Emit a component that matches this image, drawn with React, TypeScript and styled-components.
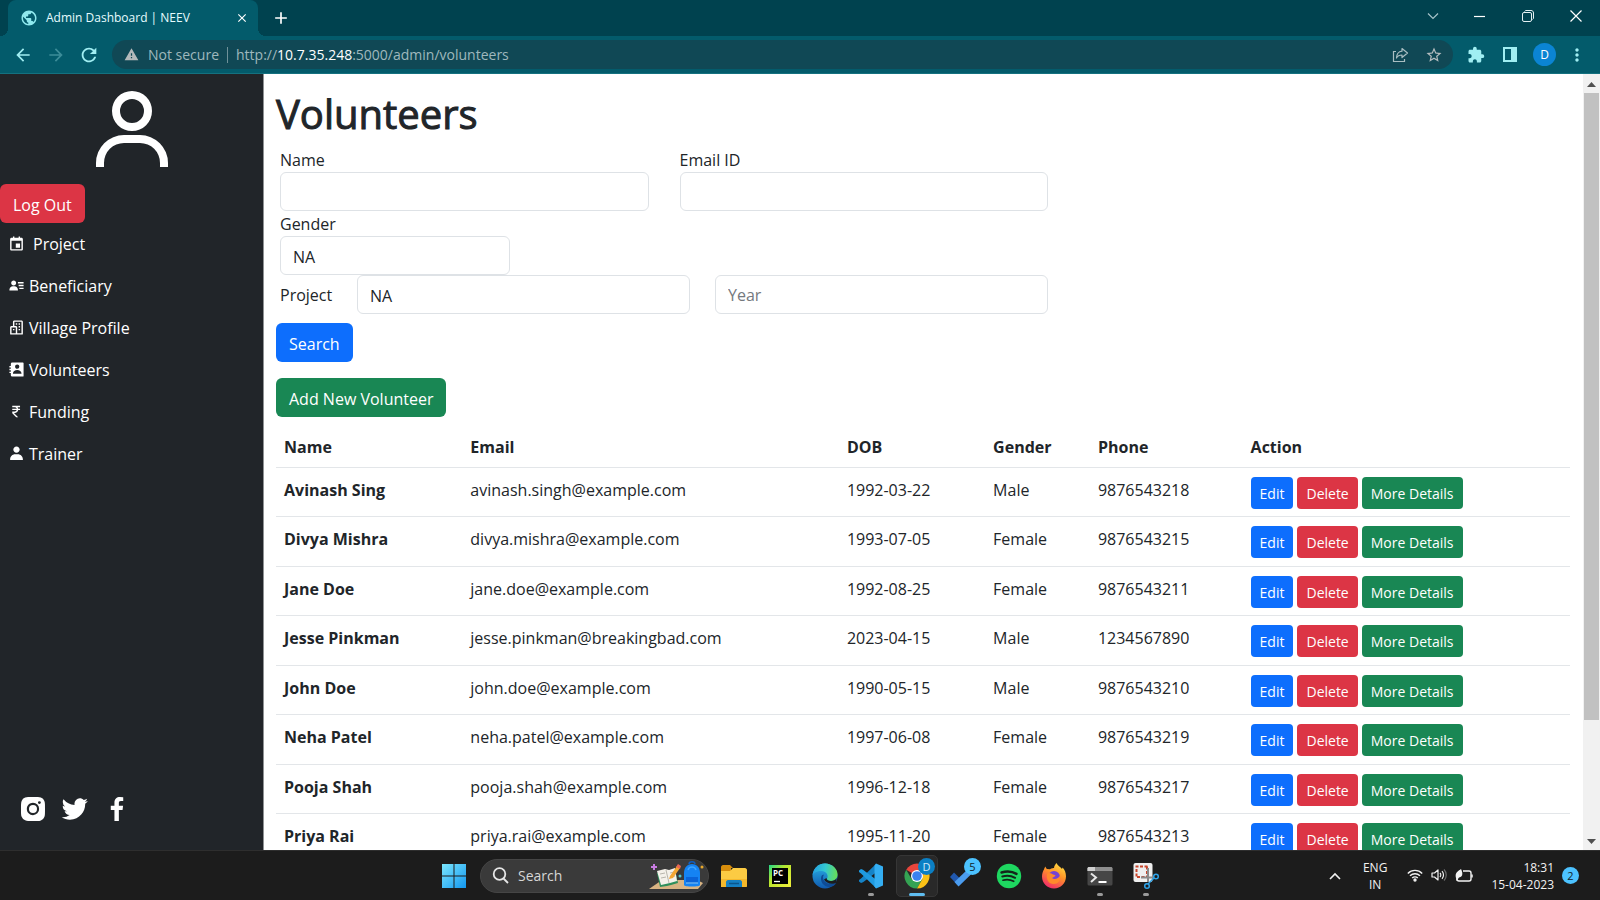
import React from "react";
import styled, { createGlobalStyle } from "styled-components";
import {
  BiUser,
  BiCalendarEvent,
  BiSolidUserDetail,
  BiBuildings,
  BiSolidContact,
  BiRupee,
  BiSolidUser,
  BiLogoInstagramAlt,
  BiLogoTwitter,
  BiLogoFacebook,
} from "react-icons/bi";
import {
  MdPublic,
  MdClose,
  MdAdd,
  MdArrowBack,
  MdArrowForward,
  MdRefresh,
  MdWarning,
  MdStarBorder,
  MdExtension,
  MdMoreVert,
} from "react-icons/md";

const GlobalStyle = createGlobalStyle`
  *, *::before, *::after { box-sizing: border-box; }
  body {
    margin: 0;
    font-family: "Segoe UI", "Open Sans", "Noto Sans", sans-serif;
    font-size: 16px;
    line-height: 24px;
    color: #212529;
  }
  button, input, select { font: inherit; color: inherit; margin: 0; }
  button { cursor: pointer; }
  svg { display: block; flex: none; }
`;

const Screen = styled.div`
  display: flex;
  flex-direction: column;
  height: 100vh;
  overflow: hidden;
  background: #fff;
`;

/* ---------- browser frame ---------- */

const TabStrip = styled.div`
  display: flex;
  align-items: stretch;
  height: 36px;
  flex: none;
  padding-left: 8px;
  background: #00424f;
`;

const Tab = styled.div`
  position: relative;
  display: flex;
  align-items: center;
  width: 250px;
  padding: 0 9px 0 12px;
  border-radius: 8px 8px 0 0;
  background: #035b6b;
  color: #e6fbff;
  font-size: 12px;
  line-height: 16px;

  &::before,
  &::after {
    content: "";
    position: absolute;
    bottom: 0;
    width: 8px;
    height: 8px;
  }
  &::before {
    right: 100%;
    background: radial-gradient(circle at 0 0, transparent 8px, #035b6b 8px);
  }
  &::after {
    left: 100%;
    background: radial-gradient(circle at 100% 0, transparent 8px, #035b6b 8px);
  }
`;

const TabTitle = styled.span`
  flex: 1;
  margin-left: 8px;
  white-space: nowrap;
`;

const ChromeButton = styled.button<{ $w?: number; $color?: string }>`
  display: flex;
  align-items: center;
  justify-content: center;
  width: ${(p) => p.$w ?? 33}px;
  padding: 0;
  border: 0;
  background: none;
  color: ${(p) => p.$color ?? "#a0eef2"};
`;

const WindowButtons = styled.div`
  display: flex;
  margin-left: auto;
  padding-bottom: 5px;
`;

const Toolbar = styled.div`
  display: flex;
  align-items: center;
  height: 38px;
  flex: none;
  padding: 0 7px 0 6px;
  background: #035b6b;
  border-bottom: 1px solid #14717f;
`;

const AddressBar = styled.div`
  display: flex;
  align-items: center;
  flex: 1;
  height: 29px;
  margin-left: 7px;
  padding: 0 3px 0 12px;
  border-radius: 15px;
  background: #104855;
  color: #9fb8bd;
  font-size: 14px;
  line-height: 20px;
`;

const Security = styled.span`
  margin-left: 9px;
  padding-right: 8px;
  border-right: 1px solid #6f9199;
  line-height: 16px;
`;

const Address = styled.span`
  flex: 1;
  margin-left: 8px;
  b {
    font-weight: 400;
    color: #fff;
  }
`;

const Avatar = styled.button`
  display: flex;
  align-items: center;
  justify-content: center;
  width: 23px;
  height: 23px;
  margin: 0 4px 0 13px;
  padding: 0;
  border: 0;
  border-radius: 50%;
  background: #0b84d3;
  color: #fff;
  font-size: 12px;
`;

/* ---------- page ---------- */

const Page = styled.div`
  display: flex;
  flex: 1;
  min-height: 0;
`;

const Sidebar = styled.aside`
  display: flex;
  flex-direction: column;
  width: 264px;
  flex: none;
  background: #212529;
  border-right: 1px solid #8f9294;
  color: #fff;
`;

const Profile = styled.div`
  display: flex;
  justify-content: center;
  padding: 9px 0 5px;
`;

type Tone = "primary" | "danger" | "success";
const tones: Record<Tone, string> = {
  primary: "#0d6efd",
  danger: "#dc3545",
  success: "#198754",
};

const Button = styled.button<{ $tone: Tone; $small?: boolean }>`
  align-self: flex-start;
  height: ${(p) => (p.$small ? 32 : 39)}px;
  padding: ${(p) => (p.$small ? "1px 9px 0" : "2px 13px 0")};
  border: 0;
  border-radius: ${(p) => (p.$small ? 4 : 6)}px;
  background: ${(p) => tones[p.$tone]};
  color: #fff;
  font-size: ${(p) => (p.$small ? 14 : 16)}px;
  white-space: nowrap;
`;

const Nav = styled.nav`
  display: flex;
  flex-direction: column;
  gap: 18px;
  padding: 9px 8px;
`;

const NavLink = styled.a<{ $wide?: boolean }>`
  display: flex;
  align-items: center;
  gap: ${(p) => (p.$wide ? 8 : 4)}px;
  color: #fff;
  text-decoration: none;
  svg {
    margin-bottom: 2px;
  }
`;

const Socials = styled.div`
  display: flex;
  gap: 10px;
  margin-top: auto;
  padding: 0 17px 25px;
  a {
    color: #fff;
  }
`;

const Main = styled.main`
  display: flex;
  flex-direction: column;
  flex: 1;
  min-width: 0;
  overflow: hidden;
  padding: 15px 13px 0 12px;
`;

const Title = styled.h1`
  margin: 0 0 8px;
  font-size: 40px;
  line-height: 50px;
  font-weight: 500;
  -webkit-text-stroke: 1px currentColor;
`;

const SearchForm = styled.form`
  display: flex;
  flex-direction: column;
`;

const Fields = styled.div`
  display: flex;
  flex-direction: column;
  max-width: 772px;
  margin-bottom: 9px;
  padding-left: 4px;
`;

const FieldPair = styled.div`
  display: grid;
  grid-template-columns: 1fr 1fr;
  gap: 31px;
`;

const Field = styled.div<{ $narrow?: boolean }>`
  display: flex;
  flex-direction: column;
  width: ${(p) => (p.$narrow ? "30%" : "auto")};
  label {
    padding-top: 2px;
    line-height: 23px;
  }
`;

const ProjectRow = styled.div`
  display: grid;
  grid-template-columns: 52px 1fr 1fr;
  align-items: center;
  gap: 25px;
`;

const TextBox = styled.input`
  width: 100%;
  height: 39px;
  padding: 1px 12px 0;
  border: 1px solid #dee2e6;
  border-radius: 6px;
  background: #fff;
  &::placeholder {
    color: #74797e;
    opacity: 1;
  }
`;

const Select = styled.select`
  appearance: none;
  width: 100%;
  height: 39px;
  padding: 2px 12px 0;
  border: 1px solid #dee2e6;
  border-radius: 6px;
  background: #fff;
`;

const AddRow = styled.div`
  display: flex;
  margin: 16px 0 8px;
`;

const Table = styled.table`
  width: 100%;
  table-layout: fixed;
  border-collapse: collapse;
  text-align: left;

  th,
  td {
    padding: 9px 9px 7px 8px;
    border-bottom: 1px solid #e3e6e9;
    vertical-align: top;
    line-height: 26px;
  }
  thead th {
    height: 42px;
  }
  tbody tr {
    height: 49px;
  }
  tbody tr:nth-child(even) {
    height: 50px;
  }
`;

const Actions = styled.div`
  display: flex;
  gap: 4px;
`;

const ScrollBar = styled.div`
  display: flex;
  flex-direction: column;
  align-items: center;
  width: 17px;
  flex: none;
  background: #f1f1f1;
`;

const ScrollArrow = styled.svg`
  width: 9px;
  height: 5px;
  margin: 8px 0 6px;
  fill: #505050;
`;

const ScrollTrack = styled.div`
  flex: 1;
  width: 15px;
`;

const ScrollThumb = styled.div`
  height: 85%;
  background: #c1c1c1;
`;

/* ---------- taskbar ---------- */

const Taskbar = styled.footer`
  display: flex;
  align-items: center;
  height: 50px;
  flex: none;
  padding: 0 21px 0 440px;
  background: #1c1c1c;
  border-top: 1px solid #2e2e2e;
  color: #f2f2f2;
`;

const TaskSearch = styled.label`
  display: flex;
  align-items: center;
  width: 229px;
  height: 34px;
  margin: 0 2px 0 13px;
  padding: 0 4px 0 11px;
  border: 1px solid #454545;
  border-radius: 17px;
  background: #3a3a3a;
  input {
    flex: 1;
    min-width: 0;
    margin-left: 9px;
    padding: 0;
    border: 0;
    background: none;
    font-size: 14px;
    line-height: 20px;
    outline: 0;
  }
  input::placeholder {
    color: #d6d6d6;
    opacity: 1;
  }
`;

const Apps = styled.div`
  display: flex;
  width: 458px;
  height: 42px;
`;

const AppButton = styled.button<{ $active?: boolean; $running?: boolean }>`
  position: relative;
  display: flex;
  align-items: center;
  justify-content: center;
  flex: 1;
  margin: 0 2px;
  padding: 0;
  border: 1px solid ${(p) => (p.$active ? "#363636" : "transparent")};
  border-radius: 5px;
  background: ${(p) => (p.$active ? "#292929" : "none")};

  &::after {
    content: "";
    display: ${(p) => (p.$active || p.$running ? "block" : "none")};
    position: absolute;
    bottom: 0;
    left: 50%;
    width: ${(p) => (p.$active ? 16 : 6)}px;
    height: 3px;
    border-radius: 2px;
    background: ${(p) => (p.$active ? "#5fbdf0" : "#9a9a9a")};
    transform: translateX(-50%);
  }
`;

const Badge = styled.span<{ $bg: string; $fg: string }>`
  position: absolute;
  top: 2px;
  right: 2px;
  width: 17px;
  height: 17px;
  border-radius: 50%;
  background: ${(p) => p.$bg};
  color: ${(p) => p.$fg};
  font-size: 11px;
  line-height: 17px;
  text-align: center;
`;

const Tray = styled.div`
  display: flex;
  align-items: center;
  margin-left: auto;
  font-size: 12px;
  line-height: 17px;
`;

const Language = styled.div`
  margin: 0 20px 0 22px;
  text-align: center;
`;

const StatusIcons = styled.div`
  display: flex;
  gap: 8px;
`;

const Clock = styled.div`
  margin: 0 8px 0 18px;
  text-align: right;
`;

const Count = styled.div`
  width: 17px;
  height: 17px;
  border-radius: 50%;
  background: #4cc2ff;
  color: #10222c;
  font-size: 11px;
  text-align: center;
`;

/* ---------- drawings ---------- */

const WindowsLogo = () => (
  <svg width="26" height="26" viewBox="0 0 26 26">
    <defs>
      <linearGradient id="win" x1="0" y1="0" x2="1" y2="1" gradientUnits="objectBoundingBox">
        <stop offset="0" stopColor="#7be6fd" />
        <stop offset="1" stopColor="#1297f0" />
      </linearGradient>
    </defs>
    <path fill="url(#win)" d="M1 1h11.500v11.500H1zM13.500 1H25v11.500H13.500zM1 13.500h11.500V25H1zM13.500 13.500H25V25H13.500z" />
  </svg>
);

const SearchArt = () => (
  <svg width="56" height="30" viewBox="0 0 56 30">
    <path d="M1 28 14 19h35l6 3-5 6z" fill="#d9b483" />
    <path d="M6 3v6M3 6h6" stroke="#c77be0" strokeWidth="2" />
    <path d="m9 12 8-3 4 2 6-2 3 13-7 2-4 1-7 1z" fill="#2f8f5b" />
    <path d="m9 10 8-2 4 1 6-2 2 13-7 2-9 2z" fill="#f4f1ea" />
    <path d="m18 9 3 13M12 13l5-1M13 17l5-1M22 12l4-1M23 16l4-1" stroke="#b9b6ad" />
    <path d="m22 15 7-10 3 2-7 10-4 1z" fill="#f3a632" />
    <path d="m28 6 2-3 3 2-1 3z" fill="#e86652" />
    <circle cx="32" cy="15" r="1.500" fill="#52c5cb" />
    <circle cx="54" cy="6" r="1.500" fill="#e9a92b" />
    <path d="M41 3c0-3 6-3 6 0" fill="none" stroke="#0f5fc2" strokeWidth="1.500" />
    <path d="M36 12c0-12 16-12 16 0v12c0 2-16 2-16 0z" fill="#1583f3" />
    <path d="M38 16h12v6c0 1-12 1-12 0z" fill="#0a63d8" />
    <path d="M38 22h12" stroke="#8dd5ff" />
    <path d="M40 9c1-4 7-4 8 0" fill="none" stroke="#3ea6ff" strokeWidth="1.500" />
  </svg>
);

const FolderIcon = () => (
  <svg width="26" height="24" viewBox="0 0 26 24">
    <path d="M0 3c0-1 1-2 2-2h7l3 3h-2v4H0z" fill="#d78d0c" />
    <path d="M0 7h9l3-3h12c1 0 2 1 2 2v15c0 1-1 2-2 2H0z" fill="#fccb43" />
    <path d="M0 15h26v7c0 .6-.4 1-1 1H1c-.6 0-1-.4-1-1z" fill="#f4b82c" />
    <path d="M5 18c0-1 1-2 2-2h12c1 0 2 1 2 2v5H5z" fill="#1580c4" />
    <path d="M8 19.500h10" stroke="#0b568d" strokeWidth="1.500" />
  </svg>
);

const PyCharmIcon = () => (
  <svg width="22" height="22" viewBox="0 0 22 22">
    <defs>
      <linearGradient id="pc" x1="0" y1="0" x2="1" y2="1">
        <stop offset="0" stopColor="#21d789" />
        <stop offset=".4" stopColor="#b8e62e" />
        <stop offset="1" stopColor="#f1ed3c" />
      </linearGradient>
    </defs>
    <path fill="url(#pc)" d="M0 0h22v22H0z" />
    <path d="M3 3h16v16H3z" />
    <path d="M5 16.500h6" stroke="#fff" strokeWidth="1.300" />
    <text x="4" y="11" fill="#fff" fontSize="8" fontWeight="700" fontFamily="Open Sans, sans-serif">
      PC
    </text>
  </svg>
);

const EdgeIcon = () => (
  <svg width="26" height="26" viewBox="0 0 26 26">
    <defs>
      <linearGradient id="eg" x1="0" y1=".3" x2="1" y2=".4">
        <stop offset="0" stopColor="#249fe2" />
        <stop offset=".5" stopColor="#33c8d2" />
        <stop offset="1" stopColor="#66df57" />
      </linearGradient>
      <linearGradient id="eb" x1="0" y1="0" x2="0" y2="1">
        <stop offset="0" stopColor="#2bb5e8" />
        <stop offset="1" stopColor="#1059ae" />
      </linearGradient>
    </defs>
    <circle cx="13" cy="13" r="12.500" fill="url(#eb)" />
    <path d="M.6 12C1.500 5 6.500.5 13 .5c7 0 12.500 5 12.500 11 0 4-3 6.500-6.500 6.500-3 0-4.500-1-4-2.200C17 12 14 8 9.500 8 5 8 1.500 10 .6 12z" fill="url(#eg)" />
    <path d="M9.500 13c-2 5 2 11 8 11 3.500 0 5.500-2 7-4.200-1 .6-3 1.200-5 1.200-5 0-8.500-3-8.500-6.500 0-1 .3-2 1-2.800-1 0-2 .4-2.500 1.300z" fill="#0f4b95" />
    <path d="M24.500 19.500c-4 2.500-10.500 1-12.500-3l2.500-1.500c0 2 2 3 4.500 3 2.300 0 4.500-.8 5.500-3z" fill="#1c1c1c" />
  </svg>
);

const CodeIcon = () => (
  <svg width="26" height="26" viewBox="0 0 26 26">
    <path d="M18 1 3 15.500 1 17v1.500L3 20l2-.8L20 8z" fill="#1583c7" />
    <path d="M18 25 3 10.500 1 9V7.500L3 6l2 .8L20 18z" fill="#1f9ae0" />
    <path d="m18 .5 7 3V22.500l-7 3-1.500-2V2.500z" fill="#34aef2" />
  </svg>
);

const ChromeIcon = () => (
  <svg width="26" height="26" viewBox="0 0 26 26">
    <path d="M13 13 2.200 6.700A12.500 12.500 0 0 1 23.800 6.700z" fill="#e8453c" />
    <path d="M2.200 6.700A12.500 12.500 0 0 0 13 25.500L18.400 16 13 13 7.600 16z" fill="#34a353" />
    <path d="M23.800 6.700A12.500 12.500 0 0 1 13 25.500L18.400 16 13 7z" fill="#fbc116" />
    <path d="M13 6.800h10.900L18 13z" fill="#e8453c" />
    <circle cx="13" cy="13" r="6" fill="#fff" />
    <circle cx="13" cy="13" r="4.800" fill="#3b82f0" />
  </svg>
);

const TodoIcon = () => (
  <svg width="30" height="26" viewBox="0 0 30 26">
    <path d="m2 14 4-4.500 9 9-4.500 4.500z" fill="#2158ae" />
    <path d="M10.500 23.500 6.500 19 21 5l4.500 4z" fill="#4b9cee" />
  </svg>
);

const SpotifyIcon = () => (
  <svg width="26" height="26" viewBox="0 0 26 26">
    <circle cx="13" cy="13" r="12.200" fill="#1ed760" />
    <g fill="none" stroke="#14251a" strokeLinecap="round">
      <path d="M5.500 9.500c5-1.500 11-1 15 1.400" strokeWidth="2.400" />
      <path d="M6.300 13.500c4.500-1.300 9-.8 12.800 1.300" strokeWidth="2" />
      <path d="M7 17.200c3.700-1 7.500-.6 10.700 1.100" strokeWidth="1.700" />
    </g>
  </svg>
);

const FirefoxIcon = () => (
  <svg width="26" height="26" viewBox="0 0 26 26">
    <defs>
      <linearGradient id="ff" x1=".8" y1="0" x2=".3" y2="1">
        <stop offset="0" stopColor="#ffe243" />
        <stop offset=".45" stopColor="#ff9228" />
        <stop offset="1" stopColor="#f0296b" />
      </linearGradient>
    </defs>
    <path d="M15.500 0c1 2.500 4 4 5.500 6l.6-1.500c2 2 3.400 5.300 3.400 8.700 0 7-5.300 12.300-12 12.300S1 20.200 1 13.500c0-3 1-5.500 2-7 .3-1.300 1-2.500 1.500-3 .2 1 .8 2 1.500 2.500l3 .2c1.500-1 4-1.200 4-1.200C13 3 14.500 1 15.500 0z" fill="url(#ff)" />
    <circle cx="13" cy="14" r="6" fill="#7542d5" />
    <path d="M6 11c2-2 4.500-1 6 .5 1.300.3 2.500.7 2.500 1.500-1.500.5-2 1.500-3.500 2 2 2 6.500 1 8-2.500 1 5-2 8.500-6.500 8.500S5 17 6 11z" fill="#ff8a2b" />
  </svg>
);

const TerminalIcon = () => (
  <svg width="26" height="22" viewBox="0 0 26 22">
    <rect x=".5" y="2" width="25" height="18.500" rx="1.500" fill="#464646" />
    <path d="M.5 6V3.500C.5 2.700 1.200 2 2 2h22c.8 0 1.500.7 1.500 1.500V6z" fill="#8e8e8e" />
    <path d="M.5 6V3.500C.5 2.700 1.200 2 2 2h6v4z" fill="#d0d0d0" />
    <path d="m4 8.500 5 4-5 4.500" fill="none" stroke="#e8e8e8" strokeWidth="2" />
    <path d="M11.500 17h8" stroke="#fff" strokeWidth="2" />
  </svg>
);

const SnipIcon = () => (
  <svg width="28" height="28" viewBox="0 0 28 28">
    <rect x="1.500" y="1" width="19" height="19" rx="2" fill="#efefef" />
    <path d="M15.500 4.500h-11V15.500" fill="none" stroke="#c8452b" strokeWidth="2" strokeDasharray="3 1.500" />
    <path d="M15 4.500V15M5 15h9" stroke="#c8452b" strokeWidth="2" strokeDasharray="3 1.500" />
    <path d="M16 6v14M9 15.500h13" stroke="#8a8a8a" strokeWidth="2" />
    <circle cx="24" cy="14.500" r="2.300" fill="none" stroke="#2fa3e8" strokeWidth="1.500" />
    <circle cx="15" cy="24" r="2.300" fill="none" stroke="#2fa3e8" strokeWidth="1.500" />
    <path d="m22 16-4 4-2 2" fill="none" stroke="#2fa3e8" strokeWidth="1.500" />
  </svg>
);

const ShareIcon = () => (
  <svg width="17" height="16" viewBox="0 0 17 16" fill="none" stroke="#a9bec2" strokeWidth="1.200">
    <path d="M4 4.500H1.500v10h11V12" />
    <path d="M10 1.500 15.500 6 10 10.500V8C7.500 8 5.500 9 4.500 11c0-3.500 2-6.500 5.500-6.800z" strokeLinejoin="round" />
  </svg>
);

const PanelIcon = () => (
  <svg width="16" height="16" viewBox="0 0 16 16">
    <path fill="currentColor" fillRule="evenodd" d="M1 0h14v15H1zm2 2v11h6V2z" />
  </svg>
);

const WifiIcon = () => (
  <svg width="16" height="14" viewBox="0 0 16 14" fill="none" stroke="#f2f2f2" strokeWidth="1.400">
    <path d="M.8 5.400a10.200 10.200 0 0 1 14.400 0M3 7.800a7.100 7.100 0 0 1 10 0M5.200 10.100a4 4 0 0 1 5.600 0" />
    <circle cx="8" cy="12" r="1" fill="#f2f2f2" />
  </svg>
);

const SpeakerIcon = () => (
  <svg width="16" height="14" viewBox="0 0 16 14" fill="none" stroke="#f2f2f2" strokeWidth="1.200">
    <path d="M1 5h2.500L7 2v10L3.500 9H1z" strokeLinejoin="round" />
    <path d="M9 5c1 1 1 3 0 4M11 3.200c2 2 2 5.600 0 7.600" />
    <path d="M13 1.500c3 3 3 8 0 11" stroke="#6d6d6d" />
  </svg>
);

const BatteryIcon = () => (
  <svg width="18" height="16" viewBox="0 0 18 16">
    <path d="M8 3h6c1.200 0 2 .8 2 2v6c0 1.200-.8 2-2 2H4c-1.200 0-2-.8-2-2" fill="none" stroke="#f2f2f2" strokeWidth="1.400" />
    <path d="M17 6.500v3" stroke="#f2f2f2" strokeWidth="1.500" />
    <path d="M1 10C-.5 5 3 3 6 1c2 4 2 8-2 8.500L1.500 13z" fill="#f2f2f2" />
  </svg>
);

/* ---------- data ---------- */

const links = [
  { label: "Project", Icon: BiCalendarEvent, wide: true },
  { label: "Beneficiary", Icon: BiSolidUserDetail },
  { label: "Village Profile", Icon: BiBuildings },
  { label: "Volunteers", Icon: BiSolidContact },
  { label: "Funding", Icon: BiRupee },
  { label: "Trainer", Icon: BiSolidUser },
];

const columns = [
  { label: "Name", width: "14.4%" },
  { label: "Email", width: "29.1%" },
  { label: "DOB", width: "11.3%" },
  { label: "Gender", width: "8.1%" },
  { label: "Phone", width: "11.8%" },
  { label: "Action", width: "25.3%" },
];

const volunteers = [
  ["Avinash Sing", "avinash.singh@example.com", "1992-03-22", "Male", "9876543218"],
  ["Divya Mishra", "divya.mishra@example.com", "1993-07-05", "Female", "9876543215"],
  ["Jane Doe", "jane.doe@example.com", "1992-08-25", "Female", "9876543211"],
  ["Jesse Pinkman", "jesse.pinkman@breakingbad.com", "2023-04-15", "Male", "1234567890"],
  ["John Doe", "john.doe@example.com", "1990-05-15", "Male", "9876543210"],
  ["Neha Patel", "neha.patel@example.com", "1997-06-08", "Female", "9876543219"],
  ["Pooja Shah", "pooja.shah@example.com", "1996-12-18", "Female", "9876543217"],
  ["Priya Rai", "priya.rai@example.com", "1995-11-20", "Female", "9876543213"],
];

const apps = [
  { name: "File Explorer", Icon: FolderIcon },
  { name: "PyCharm", Icon: PyCharmIcon },
  { name: "Edge", Icon: EdgeIcon },
  { name: "Visual Studio Code", Icon: CodeIcon, running: true },
  { name: "Chrome", Icon: ChromeIcon, active: true, badge: "D", bg: "#0b7fc4", fg: "#cfe9f8" },
  { name: "To Do", Icon: TodoIcon, badge: "5", bg: "#4cc2ff", fg: "#10222c" },
  { name: "Spotify", Icon: SpotifyIcon },
  { name: "Firefox", Icon: FirefoxIcon },
  { name: "Terminal", Icon: TerminalIcon, running: true },
  { name: "Snipping Tool", Icon: SnipIcon, running: true },
];

export default function App() {
  return (
    <Screen>
      <GlobalStyle />
      <TabStrip>
        <Tab>
          <MdPublic size={18} color="#8fe9ee" />
          <TabTitle>Admin Dashboard | NEEV</TabTitle>
          <ChromeButton $w={14} $color="#fff" aria-label="Close tab">
            <MdClose size={14} />
          </ChromeButton>
        </Tab>
        <ChromeButton $w={46} $color="#fff" aria-label="New tab">
          <MdAdd size={20} />
        </ChromeButton>
        <WindowButtons>
          <ChromeButton $w={47} aria-label="Search tabs">
            <svg width="12" height="8" viewBox="0 0 12 8" fill="none" stroke="#a5c3c9" strokeWidth="1.200">
              <path d="m1 1.500 5 5 5-5" />
            </svg>
          </ChromeButton>
          <ChromeButton $w={48} aria-label="Minimize">
            <svg width="12" height="12" viewBox="0 0 12 12" stroke="#fff" strokeWidth="1.200">
              <path d="M0 6.500h11" />
            </svg>
          </ChromeButton>
          <ChromeButton $w={48} aria-label="Restore">
            <svg width="12" height="12" viewBox="0 0 12 12" fill="none" stroke="#e4f0f2">
              <rect x=".5" y="2.500" width="9" height="9" rx="1.500" />
              <path d="M2.500 1.500C3 .8 3.500.5 4 .5h5c1.500 0 2.500 1 2.500 2.500v5c0 .6-.3 1-1 1.500" />
            </svg>
          </ChromeButton>
          <ChromeButton $w={48} aria-label="Close">
            <svg width="12" height="12" viewBox="0 0 12 12" stroke="#fff" strokeWidth="1.200">
              <path d="m.5.5 11 11M11.500.5l-11 11" />
            </svg>
          </ChromeButton>
        </WindowButtons>
      </TabStrip>

      <Toolbar>
        <ChromeButton aria-label="Back">
          <MdArrowBack size={20} />
        </ChromeButton>
        <ChromeButton $color="#3c8d99" aria-label="Forward">
          <MdArrowForward size={20} />
        </ChromeButton>
        <ChromeButton aria-label="Reload">
          <MdRefresh size={22} />
        </ChromeButton>
        <AddressBar>
          <MdWarning size={15} color="#b3b9bb" />
          <Security>Not secure</Security>
          <Address>
            http://<b>10.7.35.248</b>:5000/admin/volunteers
          </Address>
          <ChromeButton aria-label="Share">
            <ShareIcon />
          </ChromeButton>
          <ChromeButton $color="#b5bdc0" aria-label="Bookmark">
            <MdStarBorder size={18} />
          </ChromeButton>
        </AddressBar>
        <ChromeButton $w={46} aria-label="Extensions">
          <MdExtension size={18} />
        </ChromeButton>
        <ChromeButton $w={21} aria-label="Side panel">
          <PanelIcon />
        </ChromeButton>
        <Avatar aria-label="Profile D">D</Avatar>
        <ChromeButton aria-label="Menu">
          <MdMoreVert size={20} />
        </ChromeButton>
      </Toolbar>

      <Page>
        <Sidebar>
          <Profile>
            <BiUser size={96} />
          </Profile>
          <Button $tone="danger">Log Out</Button>
          <Nav>
            {links.map(({ label, Icon, wide }) => (
              <NavLink key={label} href="#" $wide={wide}>
                <Icon size={17} />
                {label}
              </NavLink>
            ))}
          </Nav>
          <Socials>
            <a href="#" aria-label="Instagram">
              <BiLogoInstagramAlt size={32} />
            </a>
            <a href="#" aria-label="Twitter">
              <BiLogoTwitter size={32} />
            </a>
            <a href="#" aria-label="Facebook">
              <BiLogoFacebook size={32} />
            </a>
          </Socials>
        </Sidebar>

        <Main>
          <Title>Volunteers</Title>
          <SearchForm>
            <Fields>
              <FieldPair>
                <Field>
                  <label htmlFor="name">Name</label>
                  <TextBox id="name" />
                </Field>
                <Field>
                  <label htmlFor="email">Email ID</label>
                  <TextBox id="email" />
                </Field>
              </FieldPair>
              <Field $narrow>
                <label htmlFor="gender">Gender</label>
                <Select id="gender">
                  <option>NA</option>
                </Select>
              </Field>
              <ProjectRow>
                <label htmlFor="project">Project</label>
                <Select id="project">
                  <option>NA</option>
                </Select>
                <TextBox placeholder="Year" aria-label="Year" />
              </ProjectRow>
            </Fields>
            <Button $tone="primary" type="button">
              Search
            </Button>
          </SearchForm>
          <AddRow>
            <Button $tone="success">Add New Volunteer</Button>
          </AddRow>
          <Table>
            <colgroup>
              {columns.map((c) => (
                <col key={c.label} style={{ width: c.width }} />
              ))}
            </colgroup>
            <thead>
              <tr>
                {columns.map((c) => (
                  <th key={c.label} scope="col">
                    {c.label}
                  </th>
                ))}
              </tr>
            </thead>
            <tbody>
              {volunteers.map(([name, ...rest]) => (
                <tr key={name}>
                  <th scope="row">{name}</th>
                  {rest.map((value) => (
                    <td key={value}>{value}</td>
                  ))}
                  <td>
                    <Actions>
                      <Button $small $tone="primary">Edit</Button>
                      <Button $small $tone="danger">Delete</Button>
                      <Button $small $tone="success">More Details</Button>
                    </Actions>
                  </td>
                </tr>
              ))}
            </tbody>
          </Table>
        </Main>

        <ScrollBar>
          <ScrollArrow viewBox="0 0 9 5">
            <path d="M0 5 4.500 0 9 5z" />
          </ScrollArrow>
          <ScrollTrack>
            <ScrollThumb />
          </ScrollTrack>
          <ScrollArrow viewBox="0 0 9 5">
            <path d="M0 0 4.500 5 9 0z" />
          </ScrollArrow>
        </ScrollBar>
      </Page>

      <Taskbar>
        <ChromeButton $w={27} aria-label="Start">
          <WindowsLogo />
        </ChromeButton>
        <TaskSearch>
          <svg width="17" height="17" viewBox="0 0 17 17" fill="none" stroke="#e6e6e6" strokeWidth="1.800">
            <circle cx="7.500" cy="7" r="5.800" />
            <path d="m11.500 11.500 4.500 4.500" />
          </svg>
          <input placeholder="Search" aria-label="Search" />
          <SearchArt />
        </TaskSearch>
        <Apps>
          {apps.map(({ name, Icon, active, running, badge, bg, fg }) => (
            <AppButton key={name} $active={active} $running={running} aria-label={name}>
              <Icon />
              {badge && (
                <Badge $bg={bg!} $fg={fg!}>
                  {badge}
                </Badge>
              )}
            </AppButton>
          ))}
        </Apps>
        <Tray>
          <svg width="12" height="8" viewBox="0 0 12 8" fill="none" stroke="#f2f2f2" strokeWidth="1.600">
            <path d="m1 7 5-5 5 5" />
          </svg>
          <Language>
            ENG
            <br />
            IN
          </Language>
          <StatusIcons>
            <WifiIcon />
            <SpeakerIcon />
            <BatteryIcon />
          </StatusIcons>
          <Clock>
            18:31
            <br />
            15-04-2023
          </Clock>
          <Count>2</Count>
        </Tray>
      </Taskbar>
    </Screen>
  );
}
